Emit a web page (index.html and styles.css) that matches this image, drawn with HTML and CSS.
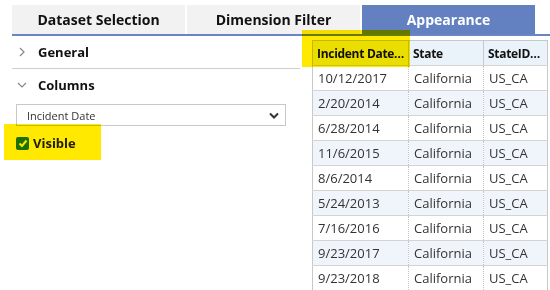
FILE: index.html
```html
<!DOCTYPE html>
<html lang="en">
<head>
  <meta charset="UTF-8" />
  <title>Appearance</title>
  <link rel="stylesheet" href="styles.css">
</head>
<body>
  <div class="page">
    <div class="tabs">
      <div class="tab">Dataset Selection</div>
      <div class="tab">Dimension Filter</div>
      <div class="tab active">Appearance</div>
    </div>

    <div class="content">
      <div class="panel">
        <div class="section closed">
          <svg class="chev" width="8" height="10" viewBox="0 0 8 10"><path d="M2 1 L6 5 L2 9" fill="none" stroke="#888" stroke-width="1.2"/></svg>
          <span>General</span>
        </div>
        <div class="section open">
          <svg class="chev" width="10" height="8" viewBox="0 0 10 8"><path d="M1 2 L5 6 L9 2" fill="none" stroke="#888" stroke-width="1.2"/></svg>
          <span>Columns</span>
        </div>
        <div class="select">
          <span>Incident Date</span>
          <svg width="10" height="7" viewBox="0 0 10 7"><path d="M1 1.5 L5 5.5 L9 1.5" fill="none" stroke="#333" stroke-width="2"/></svg>
        </div>
        <label class="check">
          <span class="box"><svg width="10" height="9" viewBox="0 0 10 9"><path d="M1.5 4.5 L4 7 L8.5 1.5" fill="none" stroke="#fff" stroke-width="2"/></svg></span>
          Visible
        </label>
      </div>

      <table class="grid">
        <thead>
          <tr><th>Incident Date…</th><th>State</th><th>StateID…</th></tr>
        </thead>
        <tbody>
          <tr><td>10/12/2017</td><td>California</td><td>US_CA</td></tr>
          <tr><td>2/20/2014</td><td>California</td><td>US_CA</td></tr>
          <tr><td>6/28/2014</td><td>California</td><td>US_CA</td></tr>
          <tr><td>11/6/2015</td><td>California</td><td>US_CA</td></tr>
          <tr><td>8/6/2014</td><td>California</td><td>US_CA</td></tr>
          <tr><td>5/24/2013</td><td>California</td><td>US_CA</td></tr>
          <tr><td>7/16/2016</td><td>California</td><td>US_CA</td></tr>
          <tr><td>9/23/2017</td><td>California</td><td>US_CA</td></tr>
          <tr><td>9/23/2018</td><td>California</td><td>US_CA</td></tr>
        </tbody>
      </table>
    </div>

    <!-- marcadores amarillos -->
    <div class="mark mark-header"></div>
    <div class="mark mark-visible"></div>
  </div>
</body>
</html>
```

FILE: styles.css
```css
body {
  margin: 0;
  font-family: 'Open Sans', 'Noto Sans', sans-serif;
  background-color: #ffffff;
  color: #222;
}

.page {
  position: relative;
  width: 550px;
  height: 290px;
  overflow: hidden;
  padding: 5px 0 0 12px;
  box-sizing: border-box;
}

.tabs {
  display: flex;
  height: 29px;
  border-bottom: 2px solid #6a86c2;
}

.tab {
  width: 173px;
  margin-right: 1px;
  background-color: #f2f2f2;
  border-right: 1px solid #ffffff;
  font-weight: bold;
  font-size: 14px;
  color: #111;
  display: flex;
  align-items: center;
  justify-content: center;
}

.tab.active {
  background-color: #6381c0;
  color: #ffffff;
  border-right: none;
}

.content {
  display: flex;
  gap: 12px;
}

.panel {
  width: 288px;
}

.section {
  display: flex;
  align-items: center;
  height: 32px;
  font-weight: bold;
  font-size: 13px;
  color: #111;
}

.section.closed {
  border-bottom: 1px solid #cfcfcf;
}

.chev {
  width: 12px;
  margin: 0 10px 0 4px;
}

.select {
  margin: 3px 14px 0 4px;
  height: 20px;
  border: 1px solid #c8c8c8;
  display: flex;
  align-items: center;
  justify-content: space-between;
  padding: 0 6px 0 10px;
  font-size: 11px;
  color: #333;
}

.check {
  display: flex;
  align-items: center;
  gap: 4px;
  margin: 8px 0 0 4px;
  font-weight: bold;
  font-size: 13px;
  color: #222;
}

.box {
  width: 13px;
  height: 13px;
  border-radius: 2px;
  background-color: #1d7a1d;
  display: flex;
  align-items: center;
  justify-content: center;
}

.grid {
  margin-top: 4px;
  width: 236px;
  border-collapse: collapse;
  font-size: 13px;
  table-layout: fixed;
  border: 1px solid #c8c8c8;
}

.grid th, .grid td {
  height: 24px;
  padding: 0 5px;
  text-align: left;
  white-space: nowrap;
  overflow: hidden;
  border-bottom: 1px solid #d4d4d4;
  border-left: 1px dotted #c4c4c4;
}

.grid th:first-child, .grid td:first-child {
  width: 87px;
  border-left: 1px solid #c8c8c8;
}

.grid th:nth-child(2) {
  width: 66px;
}

.grid th {
  background-color: #eaf2fa;
  color: #111;
  font-size: 12px;
  letter-spacing: -0.3px;
  padding: 0 4px;
  border-left: 1px solid #c8c8c8;
}

.grid td {
  color: #333;
}

.grid tbody tr:nth-child(even) td {
  background-color: #f0f5fb;
}

.mark {
  position: absolute;
  background-color: #ffe900;
  mix-blend-mode: multiply;
}

.mark-header {
  left: 302px;
  top: 30px;
  width: 108px;
  height: 37px;
}

.mark-visible {
  left: 4px;
  top: 124px;
  width: 97px;
  height: 36px;
}
```
